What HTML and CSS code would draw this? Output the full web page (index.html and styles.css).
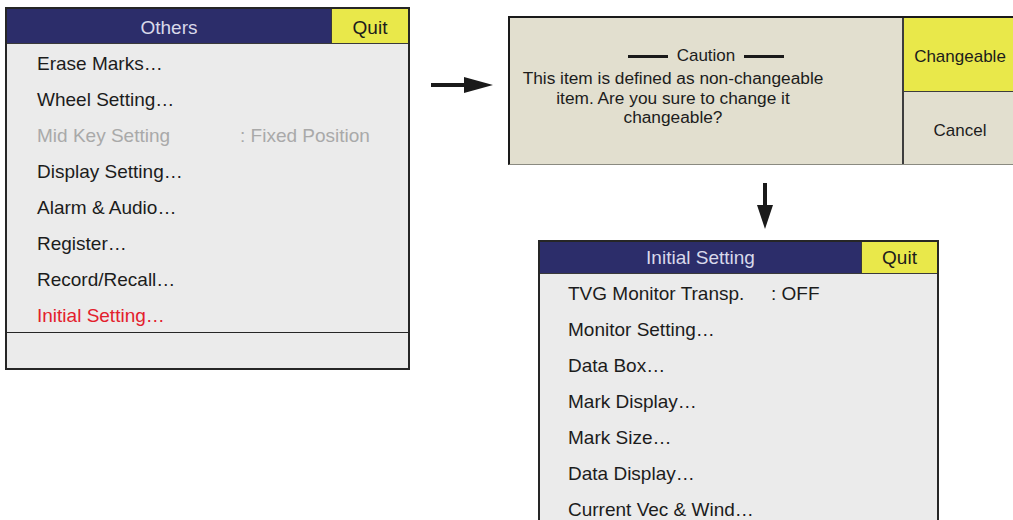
FILE: index.html
```html
<!DOCTYPE html>
<html>
<head>
<meta charset="utf-8">
<link rel="stylesheet" href="styles.css">
</head>
<body>
<div class="canvas">
  <div class="menu menu-others">
    <div class="menu-title title-tall">
      <div class="title-text">Others</div>
      <div class="quit">Quit</div>
    </div>
    <ul class="items">
      <li>Erase Marks…</li>
      <li>Wheel Setting…</li>
      <li class="disabled"><span class="label">Mid Key Setting</span><span class="value">: Fixed Position</span></li>
      <li>Display Setting…</li>
      <li>Alarm &amp; Audio…</li>
      <li>Register…</li>
      <li>Record/Recall…</li>
      <li class="selected">Initial Setting…</li>
    </ul>
    <div class="footer"></div>
  </div>

  <svg class="arrow arrow-right" width="64" height="20" viewBox="0 0 64 20">
    <rect x="0" y="8" width="36" height="4" fill="#1a1a1a"/>
    <polygon points="33,2 62,10 33,18" fill="#1a1a1a"/>
  </svg>

  <div class="dialog">
    <div class="dialog-msg">
      <div class="caution"><span class="rule"></span><span>Caution</span><span class="rule"></span></div>
      <p>This item is defined as non-changeable<br>item. Are you sure to change it<br>changeable?</p>
    </div>
    <div class="dialog-btns">
      <div class="btn btn-active">Changeable</div>
      <div class="btn">Cancel</div>
    </div>
  </div>

  <svg class="arrow arrow-down" width="20" height="48" viewBox="0 0 20 48">
    <rect x="8" y="0" width="4" height="26" fill="#1a1a1a"/>
    <polygon points="2,22 18,22 10,46" fill="#1a1a1a"/>
  </svg>

  <div class="menu menu-initial">
    <div class="menu-title title-short">
      <div class="title-text">Initial Setting</div>
      <div class="quit">Quit</div>
    </div>
    <ul class="items items-initial">
      <li><span class="label">TVG Monitor Transp.</span><span class="value">: OFF</span></li>
      <li>Monitor Setting…</li>
      <li>Data Box…</li>
      <li>Mark Display…</li>
      <li>Mark Size…</li>
      <li>Data Display…</li>
      <li>Current Vec &amp; Wind…</li>
    </ul>
  </div>
</div>
</body>
</html>
```

FILE: styles.css
```css
* { box-sizing: border-box; }
html, body {
  margin: 0;
  padding: 0;
  background: #ffffff;
  overflow: hidden;
}
body {
  width: 1013px;
  height: 520px;
  font-family: "Liberation Sans", Arial, sans-serif;
  color: #1c1c1c;
}
.canvas {
  position: relative;
  width: 1013px;
  height: 520px;
  overflow: hidden;
}

/* menus */
.menu {
  position: absolute;
  background: #ebebeb;
  border: 2px solid #262626;
  display: flex;
  flex-direction: column;
}
.menu-others {
  left: 5px;
  top: 7px;
  width: 405px;
  height: 363px;
}
.menu-initial {
  left: 538px;
  top: 240px;
  width: 401px;
  height: 300px;
}
.menu-title {
  display: flex;
  background: #2c2d6a;
  border-bottom: 1px solid #3a3a3a;
}
.title-tall { height: 35px; }
.title-short { height: 32px; }
.title-text {
  flex: 1;
  display: flex;
  align-items: center;
  justify-content: center;
  padding-top: 3px;
  color: #d9d9ea;
  font-size: 19px;
}
.quit {
  width: 77px;
  background: #e9e84a;
  border-left: 1px solid #3a3a3a;
  display: flex;
  align-items: center;
  justify-content: center;
  padding-top: 3px;
  font-size: 19px;
  color: #1c1c1c;
}
.title-short .title-text,
.title-short .quit { padding-top: 1px; }
.menu-initial .quit { width: 76px; }

.items {
  list-style: none;
  margin: 0;
  padding: 0;
}
.items li {
  height: 36px;
  display: flex;
  align-items: center;
  padding-left: 30px;
  padding-top: 3px;
  font-size: 19px;
  white-space: nowrap;
}
.items-initial li { padding-left: 28px; }
.items li.disabled { color: #a9a9a9; }
.items li.selected { color: #e3202c; }
.label { width: 203px; }
.footer {
  flex: 1;
  border-top: 1px solid #262626;
}

/* arrows */
.arrow { position: absolute; }
.arrow-right { left: 431px; top: 75px; }
.arrow-down { left: 755px; top: 183px; }

/* dialog */
.dialog {
  position: absolute;
  left: 508px;
  top: 16px;
  width: 520px;
  height: 149px;
  display: flex;
  background: #e2dfcf;
  border-left: 2px solid #1a1a1a;
  border-top: 2px solid #1a1a1a;
  border-bottom: 1px solid #8a8a80;
}
.dialog-msg {
  width: 392px;
  display: flex;
  flex-direction: column;
  padding-top: 28px;
  font-size: 17px;
  color: #1c1c1c;
}
.caution {
  display: flex;
  align-items: center;
  align-self: center;
  gap: 9px;
  line-height: 20px;
}
.rule {
  width: 40px;
  height: 3px;
  background: #1a1a1a;
}
.dialog-msg p {
  margin: 3px 0 0 0;
  width: 326px;
  text-align: center;
  line-height: 19.5px;
  font-size: 17.3px;
}
.dialog-btns {
  flex: 1;
  display: flex;
  flex-direction: column;
  border-left: 2px solid #3d3d3d;
}
.btn {
  flex: 1;
  display: flex;
  align-items: center;
  justify-content: center;
  width: 112px;
  padding-top: 5px;
  font-size: 17px;
  color: #1c1c1c;
}
.btn-active {
  background: #e9e84a;
  border-bottom: 1px solid #3d3d3d;
  flex: 0 0 74px;
}
```
